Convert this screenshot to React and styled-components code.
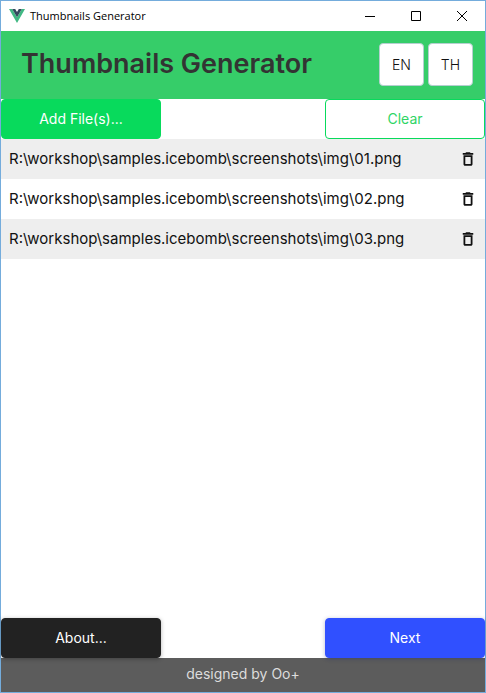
import React from "react";
import styled, { createGlobalStyle } from "styled-components";

const GlobalStyle = createGlobalStyle`
  *, *::before, *::after { box-sizing: border-box; }
  body { margin: 0; background: #fff; }
  button { font: inherit; cursor: pointer; }
`;

const AppWindow = styled.div`
  display: flex;
  flex-direction: column;
  min-height: 100vh;
  border: 1px solid #74acdc;
  background: #fff;
  color: #111;
  font-family: Inter, "Liberation Sans", sans-serif;
  font-size: 14px;
`;

const TitleBar = styled.div`
  display: flex;
  align-items: center;
  height: 30px;
  padding-left: 8px;
  color: #000;
`;

const TitleText = styled.span`
  flex: 1;
  margin-left: 5px;
  font-family: "Open Sans", "Noto Sans", sans-serif;
  font-size: 11px;
  line-height: 16px;
`;

const WindowButton = styled.button`
  display: flex;
  align-items: center;
  justify-content: center;
  width: 46px;
  height: 30px;
  padding: 0;
  border: 0;
  background: transparent;
  color: #000;
`;

const Header = styled.header`
  display: flex;
  align-items: center;
  justify-content: space-between;
  height: 68px;
  padding: 0 12px 2px 20px;
  background: #36cd69;
`;

const Heading = styled.h1`
  margin: 0;
  color: #333;
  font-size: 27px;
  font-weight: 600;
  line-height: 32px;
`;

const Languages = styled.div`
  display: flex;
  gap: 4px;
`;

const LanguageButton = styled.button`
  width: 45px;
  height: 43px;
  padding: 0;
  border: 1px solid #b5cfd0;
  border-radius: 4px;
  background: #fff;
  color: #111;
  font-weight: 300;
`;

const ActionBar = styled.div`
  display: flex;
  justify-content: space-between;
`;

const variants = {
  add: { fill: "#08da5c", text: "#fff", edge: "#08da5c", shadow: "none" },
  clear: { fill: "#fff", text: "#2fd566", edge: "#08da5c", shadow: "none" },
  about: { fill: "#222", text: "#fff", edge: "#222", shadow: "0 1px 4px rgba(0, 0, 0, 0.3)" },
  next: { fill: "#3050ff", text: "#fff", edge: "#3050ff", shadow: "0 1px 4px rgba(20, 30, 100, 0.3)" },
};

const ActionButton = styled.button`
  position: relative;
  width: 160px;
  height: 40px;
  padding: 0 0 2px;
  border: 1px solid ${({ $variant }) => variants[$variant].edge};
  border-radius: 4px;
  background: ${({ $variant }) => variants[$variant].fill};
  color: ${({ $variant }) => variants[$variant].text};
  box-shadow: ${({ $variant }) => variants[$variant].shadow};
`;

const FileList = styled.ul`
  flex: 1;
  margin: 0;
  padding: 0;
  list-style: none;
`;

const FileRow = styled.li`
  display: flex;
  align-items: center;
  justify-content: space-between;
  height: 40px;
  padding: 0 8px;
  font-size: 15px;
  &:nth-child(odd) { background: #eee; }
`;

const FilePath = styled.span`
  padding-bottom: 2px;
`;

const DeleteButton = styled.button`
  display: flex;
  padding: 0;
  border: 0;
  background: transparent;
  color: #111;
`;

const Footer = styled.footer`
  height: 34px;
  background: #5c5c5c;
  color: #ddd;
  line-height: 32px;
  text-align: center;
`;

const Logo = () => (
  <svg width="16" height="14" viewBox="0 0 16 14" aria-hidden="true">
    <path d="M0 0h3.2L8 8.3 12.8 0H16L8 14z" fill="#41b883" />
    <path d="M3.2 0h3L8 3.1 9.8 0h3L8 8.3z" fill="#35495e" />
  </svg>
);

const WindowIcon = ({ d }) => (
  <svg width="12" height="12" viewBox="0 0 12 12" fill="none" stroke="currentColor" aria-hidden="true">
    <path d={d} />
  </svg>
);

const TrashIcon = () => (
  <svg width="18" height="18" viewBox="0 0 24 24" fill="currentColor" aria-hidden="true">
    <path d="M6 19c0 1.1.9 2 2 2h8c1.1 0 2-.9 2-2V7H6v12zM8.4 9.4h7.2v9.2H8.4zm7.1-5.4l-1-1h-5l-1 1H5v2.4h14V4z" />
  </svg>
);

const controls = [
  { label: "Minimize", d: "M1 6.5h10" },
  { label: "Maximize", d: "M1.5 1.5h9v9h-9z" },
  { label: "Close", d: "M1 1l10 10M11 1L1 11" },
];

const folder = "R:\\workshop\\samples.icebomb\\screenshots\\img\\";
const files = ["01.png", "02.png", "03.png"];

export default function App() {
  return (
    <AppWindow>
      <GlobalStyle />
      <TitleBar>
        <Logo />
        <TitleText>Thumbnails Generator</TitleText>
        {controls.map(({ label, d }) => (
          <WindowButton key={label} type="button" aria-label={label}>
            <WindowIcon d={d} />
          </WindowButton>
        ))}
      </TitleBar>
      <Header>
        <Heading>Thumbnails Generator</Heading>
        <Languages>
          <LanguageButton type="button">EN</LanguageButton>
          <LanguageButton type="button">TH</LanguageButton>
        </Languages>
      </Header>
      <ActionBar>
        <ActionButton type="button" $variant="add">Add File(s)...</ActionButton>
        <ActionButton type="button" $variant="clear">Clear</ActionButton>
      </ActionBar>
      <FileList>
        {files.map((name) => (
          <FileRow key={name}>
            <FilePath>{folder + name}</FilePath>
            <DeleteButton type="button" aria-label={`Remove ${name}`}>
              <TrashIcon />
            </DeleteButton>
          </FileRow>
        ))}
      </FileList>
      <ActionBar>
        <ActionButton type="button" $variant="about">About...</ActionButton>
        <ActionButton type="button" $variant="next">Next</ActionButton>
      </ActionBar>
      <Footer>designed by Oo+</Footer>
    </AppWindow>
  );
}
